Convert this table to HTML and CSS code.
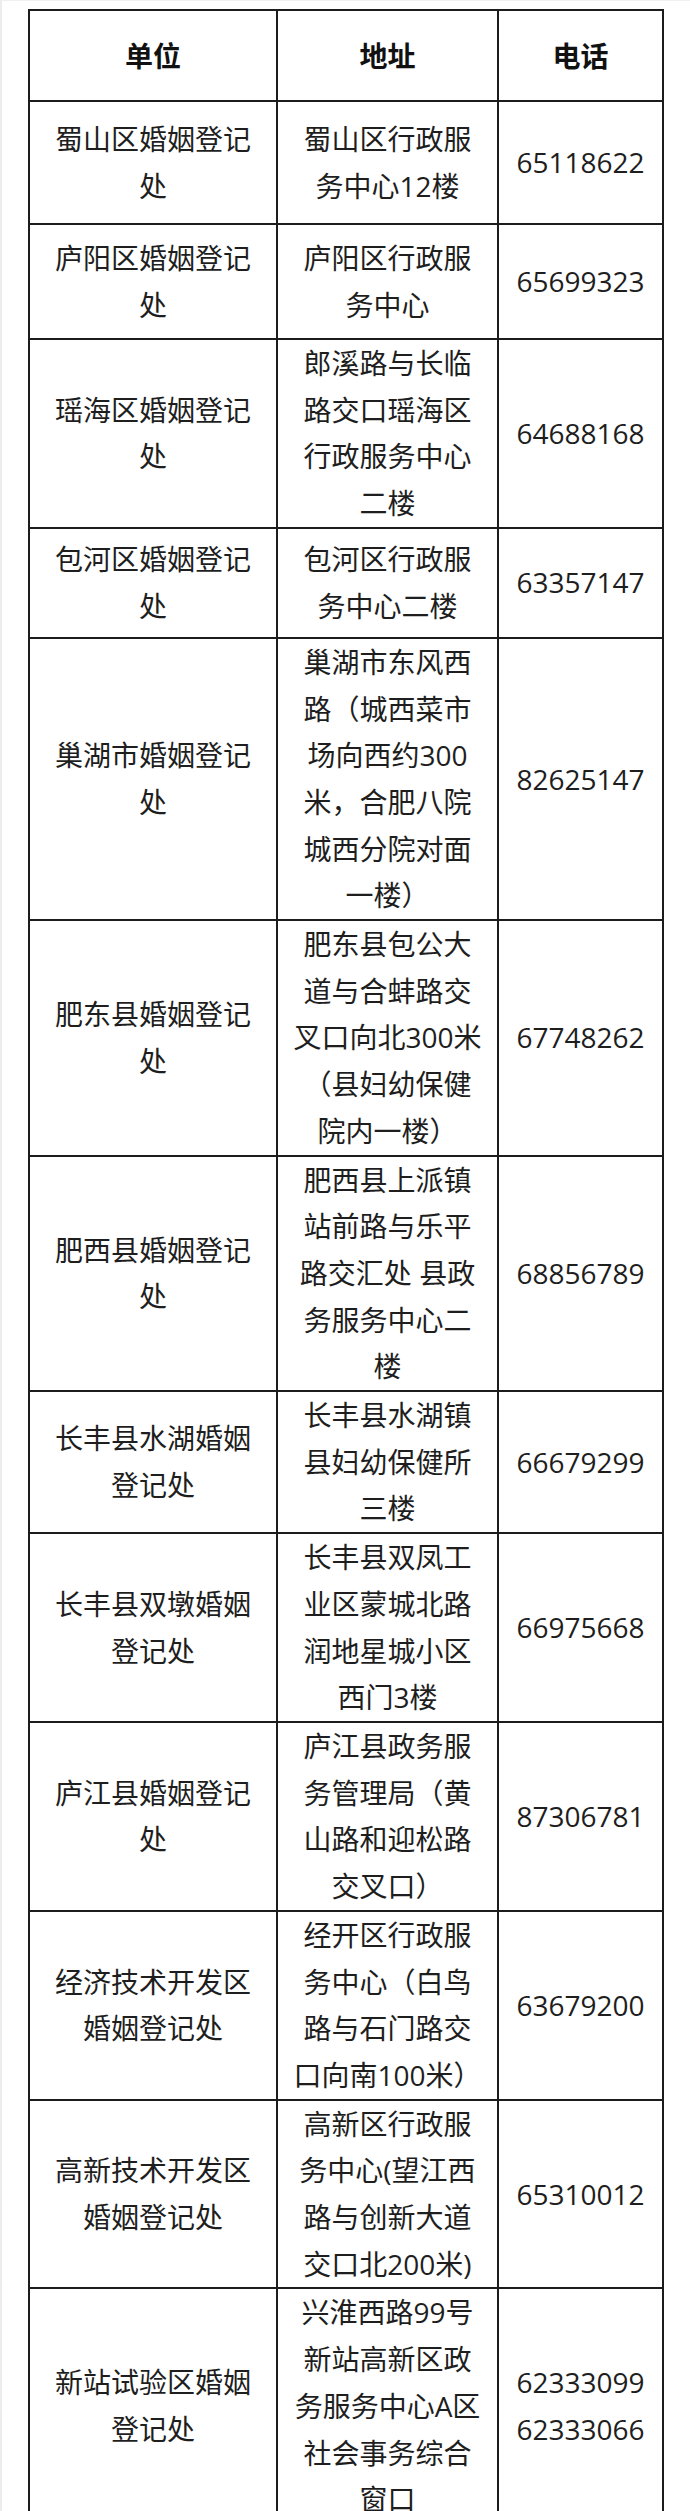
FILE: index.html
```html
<!DOCTYPE html>
<html lang="zh-CN">
<head>
<meta charset="utf-8">
<title>婚姻登记处</title>
<link rel="stylesheet" href="styles.css">
</head>
<body>
<div class="page">
<table class="reg">
  <colgroup>
    <col class="c-unit">
    <col class="c-addr">
    <col class="c-tel">
  </colgroup>
  <thead>
    <tr class="head">
      <th>单位</th>
      <th>地址</th>
      <th>电话</th>
    </tr>
  </thead>
  <tbody>
    <tr><td>蜀山区婚姻登记处</td><td>蜀山区行政服务中心12楼</td><td>65118622</td></tr>
    <tr><td>庐阳区婚姻登记处</td><td>庐阳区行政服务中心</td><td>65699323</td></tr>
    <tr><td>瑶海区婚姻登记处</td><td>郎溪路与长临路交口瑶海区行政服务中心二楼</td><td>64688168</td></tr>
    <tr><td>包河区婚姻登记处</td><td>包河区行政服务中心二楼</td><td>63357147</td></tr>
    <tr><td>巢湖市婚姻登记处</td><td>巢湖市东风西路（城西菜市场向西约300米，合肥八院城西分院对面一楼）</td><td>82625147</td></tr>
    <tr><td>肥东县婚姻登记处</td><td>肥东县包公大道与合蚌路交叉口向北300米（县妇幼保健院内一楼）</td><td>67748262</td></tr>
    <tr><td>肥西县婚姻登记处</td><td>肥西县上派镇站前路与乐平路交汇处 县政务服务中心二楼</td><td>68856789</td></tr>
    <tr><td>长丰县水湖婚姻登记处</td><td>长丰县水湖镇县妇幼保健所三楼</td><td>66679299</td></tr>
    <tr><td>长丰县双墩婚姻登记处</td><td>长丰县双凤工业区蒙城北路润地星城小区西门3楼</td><td>66975668</td></tr>
    <tr><td>庐江县婚姻登记处</td><td>庐江县政务服务管理局（黄山路和迎松路交叉口）</td><td>87306781</td></tr>
    <tr><td>经济技术开发区婚姻登记处</td><td>经开区行政服务中心（白鸟路与石门路交口向南100米）</td><td>63679200</td></tr>
    <tr><td>高新技术开发区婚姻登记处</td><td>高新区行政服务中心(望江西路与创新大道交口北200米)</td><td>65310012</td></tr>
    <tr><td>新站试验区婚姻登记处</td><td>兴淮西路99号新站高新区政务服务中心A区社会事务综合窗口</td><td>62333099<br>62333066</td></tr>
  </tbody>
</table>
</div>
</body>
</html>
```

FILE: styles.css
```css
html, body {
  margin: 0;
  padding: 0;
  background: #ffffff;
}

.page {
  min-height: 2511px;
  border-left: 2px solid #ececec;
  border-top: 1px solid #f0f0f0;
  box-sizing: border-box;
  padding: 8px 0 0 26px;
}

.reg {
  border-collapse: collapse;
  table-layout: fixed;
  width: 636px;
  font-family: "Open Sans", "Noto Sans CJK SC", sans-serif;
  font-size: 28px;
  color: #1e1e1e;
  line-height: 46.7px;
}

.c-unit { width: 248px; }
.c-addr { width: 221px; }
.c-tel  { width: 165px; }

.reg th,
.reg td {
  border: 2px solid #1c1c1c;
  text-align: center;
  vertical-align: middle;
  padding: 0;
}

.reg td:nth-child(1) { padding: 0 12px; }
.reg td:nth-child(2) { padding: 0 13px; }
.reg td:nth-child(3) { padding: 0 8px; }

.reg th {
  font-weight: 700;
  font-family: "Noto Sans CJK SC", sans-serif;
  color: #111111;
}

.head { height: 91px; }

.reg tbody tr:nth-child(1) { height: 123px; }
.reg tbody tr:nth-child(2) { height: 115px; }
.reg tbody tr:nth-child(4) { height: 110px; }
```
